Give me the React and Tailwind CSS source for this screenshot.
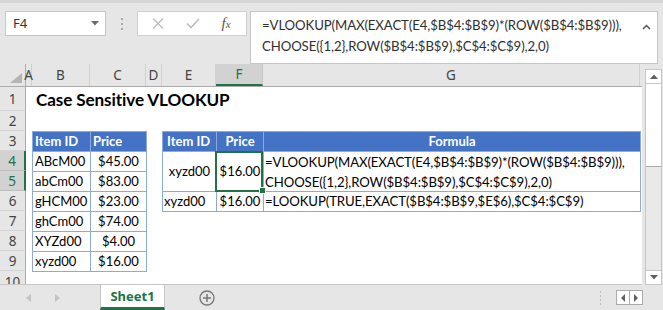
import React from "react";

const rows = [
  { n: 1, h: "h-[24px]" },
  { n: 2, h: "h-[20px]" },
  { n: 3, h: "h-[20px]" },
  { n: 4, h: "h-[20px]", sel: true },
  { n: 5, h: "h-[20px]", sel: true },
  { n: 6, h: "h-[20px]" },
  { n: 7, h: "h-[20px]" },
  { n: 8, h: "h-[20px]" },
  { n: 9, h: "h-[20px]" },
  { n: 10, h: "h-[13px]" },
];

const leftData = [
  ["ABcM00", "$45.00"],
  ["abCm00", "$83.00"],
  ["gHCM00", "$23.00"],
  ["ghCm00", "$74.00"],
  ["XYZd00", "$4.00"],
  ["xyzd00", "$16.00"],
];

function ColHead({ w, label, sel, last }) {
  return (
    <div
      className={
        "h-full flex items-center justify-center text-[13.5px] font-['Noto_Sans',sans-serif] " +
        w +
        (sel
          ? " bg-[#d2d2d2] text-[#217346] border-b-2 border-[#217346] border-r border-r-[#c6c6c6]"
          : " text-[#444] border-r border-[#d0d0d0]") +
        (last ? " border-r-0" : "")
      }
    >
      {label}
    </div>
  );
}

export default function App() {
  return (
    <div className="w-[663px] h-[310px] bg-[#e6e6e6] flex flex-col overflow-hidden font-['Lato',sans-serif] select-none">
      {/* Formula bar */}
      <div className="h-[64px] flex items-start pt-[10px] border-t-[3px] border-[#d5d5d5]">
        <div className="ml-[5px] mt-[-2px] w-[101px] h-[25px] bg-white border border-[#c6c6c6] flex items-center justify-between pl-[7px] pr-[6px]">
          <span className="text-[13px] text-[#333] font-['Noto_Sans',sans-serif]">F4</span>
          <svg width="8" height="5" viewBox="0 0 8 5">
            <path d="M0 0 H8 L4 4.5 Z" fill="#6b6b6b" />
          </svg>
        </div>
        <div className="w-[31px] h-[25px] mt-[-2px] flex flex-col items-center justify-center gap-[3px]">
          <div className="w-[2px] h-[2px] bg-[#a8a8a8]" />
          <div className="w-[2px] h-[2px] bg-[#a8a8a8]" />
          <div className="w-[2px] h-[2px] bg-[#a8a8a8]" />
        </div>
        <div className="w-[110px] h-[25px] mt-[-2px] bg-white border border-[#d0d0d0] flex items-center">
          <div className="w-[38px] flex justify-center pl-[1px]">
            <svg width="12" height="11" viewBox="0 0 12 11">
              <path d="M1 0.5 L11 10.5 M11 0.5 L1 10.5" stroke="#bdbdbd" strokeWidth="1.4" />
            </svg>
          </div>
          <div className="w-[34px] flex justify-center">
            <svg width="14" height="11" viewBox="0 0 14 11">
              <path d="M1 5.5 L5 9.5 L13 1" stroke="#bdbdbd" strokeWidth="1.6" fill="none" />
            </svg>
          </div>
          <div className="flex-1 flex justify-center pr-[4px]">
            <span className="font-['Liberation_Serif',serif] italic text-[15px] text-[#555] leading-none">
              f<span className="text-[11px]">x</span>
            </span>
          </div>
        </div>
        <div className="ml-[3px] mt-[-2px] w-[408px] h-[53px] bg-white border border-[#c6c6c6] flex justify-between pl-[11px] pr-[6px] pt-[3px]">
          <div className="text-[13.2px] tracking-[-0.1px] leading-[21px] text-[#2f2f2f] whitespace-pre">
            {"=VLOOKUP(MAX(EXACT(E4,$B$4:$B$9)*(ROW($B$4:$B$9))),\nCHOOSE({1,2},ROW($B$4:$B$9),$C$4:$C$9),2,0)"}
          </div>
          <div className="pt-[9px]">
            <svg width="9" height="6" viewBox="0 0 9 6">
              <path d="M1 5 L4.5 1.5 L8 5" stroke="#555" strokeWidth="1.5" fill="none" />
            </svg>
          </div>
        </div>
      </div>

      {/* Middle: sheet + vertical scrollbar */}
      <div className="flex h-[221px]">
        <div className="w-[642px] flex flex-col bg-white">
          {/* Column headers */}
          <div className="h-[23px] flex bg-[#e6e6e6] border-b border-[#ababab] box-content">
            <div className="w-[26px] h-full border-r border-[#ababab] flex items-end justify-end pr-[3px] pb-[3px]">
              <svg width="12" height="10" viewBox="0 0 12 10">
                <path d="M12 0 V10 H0 Z" fill="#b4b4b4" />
              </svg>
            </div>
            <ColHead w="w-[6px]" label="A" />
            <ColHead w="w-[58px]" label="B" />
            <ColHead w="w-[56px]" label="C" />
            <ColHead w="w-[16px]" label="D" />
            <ColHead w="w-[54px]" label="E" />
            <ColHead w="w-[47px]" label="F" sel />
            <ColHead w="w-[377px]" label="G" />
          </div>

          {/* Body */}
          <div className="flex-1 flex border-b border-[#c6c6c6]">
            {/* Row headers */}
            <div className="w-[26px] flex flex-col shrink-0">
              {rows.map((r) => (
                <div
                  key={r.n}
                  className={
                    r.h +
                    " flex items-center justify-center overflow-hidden text-[13.5px] font-['Noto_Sans',sans-serif] " +
                    (r.n === 10 ? "" : "border-b ") +
                    (r.sel
                      ? "bg-[#d2d2d2] text-[#217346] border-r-2 border-r-[#217346] border-b-[#bdbdbd]"
                      : "bg-[#e6e6e6] text-[#444] border-r border-r-[#ababab] border-b-[#d4d4d4]")
                  }
                >
                  <span className={r.n === 10 ? "mt-[9px] leading-none" : ""}>{r.n}</span>
                </div>
              ))}
            </div>

            {/* Cells */}
            <div className="flex-1 flex flex-col text-black">
              {/* Row 1: title */}
              <div className="h-[24px] flex items-center pl-[10px]">
                <span className="font-bold text-[17.1px] tracking-[-0.1px] mt-[1px]">Case Sensitive VLOOKUP</span>
              </div>
              {/* Row 2 */}
              <div className="h-[20px]" />
              {/* Rows 3-9 */}
              <div className="flex items-start">
                <div className="w-[6px]" />
                {/* Left table */}
                <div className="w-[115px] bg-[#8ea9db] p-px grid grid-cols-[57px_55px] gap-px text-[13px]">
                  <div className="h-[19px] bg-[#4472c4] text-white font-bold flex items-center pl-[2px]">Item ID</div>
                  <div className="h-[19px] bg-[#4472c4] text-white font-bold flex items-center pl-[2px]">Price</div>
                  {leftData.map(([id, p]) => (
                    <React.Fragment key={id}>
                      <div className="h-[19px] bg-white flex items-center pl-[2px]">{id}</div>
                      <div className="h-[19px] bg-white flex items-center justify-center">{p}</div>
                    </React.Fragment>
                  ))}
                </div>
                <div className="w-[15px]" />
                {/* Right table */}
                <div className="w-[479px] bg-[#8ea9db] p-px grid grid-cols-[53px_46px_376px] gap-px text-[13px]">
                  <div className="h-[19px] bg-[#4472c4] text-white font-bold flex items-center pl-[4px]">Item ID</div>
                  <div className="h-[19px] bg-[#4472c4] text-white font-bold flex items-center justify-center">Price</div>
                  <div className="h-[19px] bg-[#4472c4] text-white font-bold flex items-center justify-center">Formula</div>
                  <div className="h-[39px] bg-white flex items-center justify-center">xyzd00</div>
                  <div className="h-[39px] bg-white flex items-center justify-center relative">
                    <div className="absolute -left-[2px] -top-[1px] w-[48px] h-[41px] border-2 border-[#217346]" />
                    <div className="absolute -right-[3px] -bottom-[3px] w-[5px] h-[5px] bg-[#217346] border border-white box-content" />
                    $16.00
                  </div>
                  <div className="h-[39px] bg-white pl-[1px] leading-[20px] whitespace-pre text-[13.2px] tracking-[-0.1px]">
                    {"=VLOOKUP(MAX(EXACT(E4,$B$4:$B$9)*(ROW($B$4:$B$9))),\nCHOOSE({1,2},ROW($B$4:$B$9),$C$4:$C$9),2,0)"}
                  </div>
                  <div className="h-[19px] bg-white flex items-center pl-[1px]">xyzd00</div>
                  <div className="h-[19px] bg-white flex items-center justify-center">$16.00</div>
                  <div className="h-[19px] bg-white flex items-center pl-[1px] text-[13.2px] tracking-[-0.1px]">
                    =LOOKUP(TRUE,EXACT($B$4:$B$9,$E$6),$C$4:$C$9)
                  </div>
                </div>
              </div>
            </div>
          </div>
        </div>

        {/* Vertical scrollbar */}
        <div className="w-[21px] pl-[3px] pr-[1px] pt-[5px] flex flex-col">
          <div className="flex-1 flex flex-col border-x border-[#c6c6c6] bg-[#e9e9e9]">
            <div className="h-[15px] bg-white border-b border-[#c6c6c6] border-t flex items-center justify-center">
              <svg width="8" height="5" viewBox="0 0 8 5"><path d="M0 5 H8 L4 0.5 Z" fill="#606060" /></svg>
            </div>
            <div className="h-[83px] bg-white border-b border-[#ababab]" />
            <div className="flex-1" />
            <div className="h-[15px] bg-white border-y border-[#c6c6c6] flex items-center justify-center">
              <svg width="8" height="5" viewBox="0 0 8 5"><path d="M0 0 H8 L4 4.5 Z" fill="#606060" /></svg>
            </div>
          </div>
        </div>
      </div>

      {/* Bottom sheet tabs */}
      <div className="h-[25px] flex items-stretch">
        <div className="w-[100px] flex items-center">
          <div className="w-[26px]" />
          <svg width="5" height="8" viewBox="0 0 5 8"><path d="M5 0 V8 L0 4 Z" fill="#c2c2c2" /></svg>
          <div className="w-[24px]" />
          <svg width="5" height="8" viewBox="0 0 5 8"><path d="M0 0 V8 L5 4 Z" fill="#c2c2c2" /></svg>
        </div>
        <div className="w-[65px] bg-white border-x border-[#c6c6c6] border-b-[3px] border-b-[#217346] flex items-center justify-center">
          <span className="text-[#217346] font-bold text-[13px] font-['Noto_Sans',sans-serif] mt-[1px]">Sheet1</span>
        </div>
        <div className="w-[34px]" />
        <div className="flex items-center">
          <svg width="16" height="16" viewBox="0 0 16 16">
            <circle cx="8" cy="8" r="7" stroke="#777" strokeWidth="1.3" fill="none" />
            <path d="M8 4 V12 M4 8 H12" stroke="#777" strokeWidth="1.5" />
          </svg>
        </div>
        <div className="flex-1" />
        <div className="flex items-center gap-[2px] flex-col justify-center mr-[15px]">
          <div className="w-[1px] h-[2px] bg-[#bdbdbd]" />
          <div className="w-[1px] h-[2px] bg-[#bdbdbd]" />
          <div className="w-[1px] h-[2px] bg-[#bdbdbd]" />
          <div className="w-[1px] h-[2px] bg-[#bdbdbd]" />
        </div>
        <div className="flex items-center mr-[20px]">
          <div className="w-[27px] h-[15px] bg-white border border-[#ababab] flex">
            <div className="flex-1 flex items-center justify-center border-r border-[#ababab]">
              <svg width="4" height="8" viewBox="0 0 4 8"><path d="M4 0 V8 L0 4 Z" fill="#606060" /></svg>
            </div>
            <div className="flex-1 flex items-center justify-center">
              <svg width="4" height="8" viewBox="0 0 4 8"><path d="M0 0 V8 L4 4 Z" fill="#606060" /></svg>
            </div>
          </div>
        </div>
      </div>
    </div>
  );
}
